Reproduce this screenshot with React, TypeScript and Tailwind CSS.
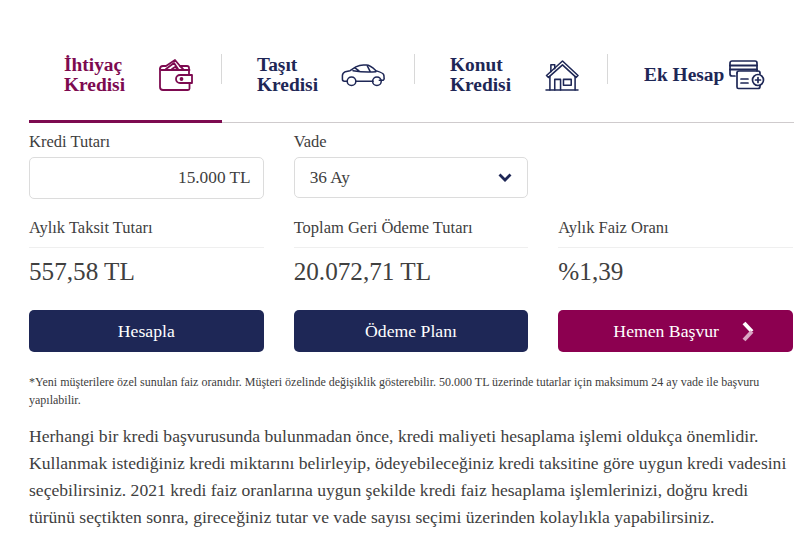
import React from "react";

const serif = "font-['Liberation_Serif','Times_New_Roman',serif]";

function Wallet() {
  return (
    <svg width="36" height="34" viewBox="0 0 36 34" fill="none" stroke="#7d0a50" strokeWidth="1.8" strokeLinejoin="round" strokeLinecap="round">
      <path d="M2 11v18a3 3 0 0 0 3 3h25a1.500 1.500 0 0 0 1.500-1.500V26" />
      <path d="M2 11a3 3 0 0 1 3-3h3l9-6 5 6h7a2 2 0 0 1 2 2v7" />
      <path d="M3 12h28.500" />
      <path d="M8 11l8-6 4 6M14 11l3-2 3 2M22 8l3 3" />
      <path d="M22 17h12v8H22a4 4 0 0 1 0-8z" />
      <circle cx="23.500" cy="21" r="1" />
    </svg>
  );
}

function Car() {
  return (
    <svg width="45" height="23" viewBox="0 0 46 24" fill="none" stroke="#1e2756" strokeWidth="1.600" strokeLinejoin="round" strokeLinecap="round">
      <path d="M6 18H3a2 2 0 0 1-2-2v-4c0-2 1-3 3-4l5-1 6-4c2-1 4-2 8-2h3c3 0 6 2 10 6 3 1 7 2 8 4 .5 1 .5 3 .5 4a2 2 0 0 1-1 2h-4" />
      <path d="M15 18h18" />
      <circle cx="10.500" cy="18" r="4.500" />
      <circle cx="37" cy="18" r="4.500" />
      <path d="M12 7c6 1 14 2 24 1M14 4l4 3M27 2l3 6" />
    </svg>
  );
}

function House() {
  return (
    <svg width="35" height="31" viewBox="0 0 36 32" fill="none" stroke="#1e2756" strokeWidth="1.600" strokeLinejoin="round" strokeLinecap="round">
      <path d="M1 31h33" />
      <path d="M1.500 16 18 1l16 15-2 2L18 5 3.500 18z" />
      <path d="M6 5h4v4M6 5v7" />
      <path d="M5 17v14M31 17v14" />
      <path d="M10 31V20h6v11" />
      <path d="M19 20h8v6h-8z" />
    </svg>
  );
}

function Card() {
  return (
    <svg width="36" height="30" viewBox="0 0 36 30" fill="none" stroke="#1e2756" strokeWidth="1.700" strokeLinejoin="round" strokeLinecap="round">
      <path d="M6 16H3a2 2 0 0 1-2-2V3a2 2 0 0 1 2-2h23a2 2 0 0 1 2 2v8" />
      <path d="M1 5.500h27M1 9.500h27" strokeWidth="1.900" />
      <path d="M8 13a2 2 0 0 1 2-2h19a2 2 0 0 1 2 2v1" />
      <path d="M8 13v14a1.500 1.500 0 0 0 1.500 1.500H29a2 2 0 0 0 2-2v-1" />
      <path d="M12 19h7M12 23h7" />
      <circle cx="29" cy="20" r="5.500" />
      <path d="M26.500 20h5M29 17.500v5" />
    </svg>
  );
}

function Tab({ label, icon, active, divider, gap, last }: { label: React.ReactNode; icon: React.ReactNode; active?: boolean; divider?: boolean; gap: string; last?: boolean }) {
  return (
    <div className={`relative ${last ? "flex-1 pl-[36px]" : "flex-none w-[193px] pl-[35px]"} h-[93px] -mb-px border-b-[3px] pt-[26px] ${active ? "border-[#7d0a50] text-[#7d0a50]" : "border-transparent text-[#1e2756]"}`}>
      <div className={`flex items-center h-[38px] ${gap}`}>
        <span className="text-[19.400px] leading-[20px] font-bold whitespace-nowrap">{label}</span>
        <span className="flex items-center">{icon}</span>
      </div>
      {divider && <span className="absolute right-0 top-[24px] h-[30px] w-px bg-[#d8d8d8]" />}
    </div>
  );
}

function Stat({ label, value }: { label: string; value: string }) {
  return (
    <div>
      <div className="h-[31px] text-[16.500px] leading-[20px] pt-[1px] text-[#404040] border-b border-[#efefef]">{label}</div>
      <div className="mt-[8px] text-[25.200px] leading-[32px] text-[#404040]">{value}</div>
    </div>
  );
}

export default function App() {
  return (
    <div className={`${serif} w-[811px] h-[543px] overflow-hidden bg-white pt-[30px] pl-[29px] pr-[18px]`}>
      <div className="flex border-b border-[#cfcbcd] -mr-px">
        <Tab active divider gap="gap-[33px]" label={<>İhtiyaç<br />Kredisi</>} icon={<Wallet />} />
        <Tab divider gap="gap-[23px]" label={<>Taşıt<br />Kredisi</>} icon={<Car />} />
        <Tab divider gap="gap-[34px]" label={<>Konut<br />Kredisi</>} icon={<House />} />
        <Tab last gap="gap-[5px]" label="Ek Hesap" icon={<Card />} />
      </div>

      <div className="grid grid-cols-3 gap-x-[30px] mt-[9px]">
        <div>
          <div className="text-[16.500px] leading-[20px] text-[#404040]">Kredi Tutarı</div>
          <div className="mt-[5px] h-[42px] rounded-[5px] border border-[#dcdcdc] flex items-center justify-end pr-[12px] text-[17.300px] text-[#404040]">15.000 TL</div>
        </div>
        <div>
          <div className="text-[16.500px] leading-[20px] text-[#404040]">Vade</div>
          <div className="mt-[5px] h-[41px] rounded-[5px] border border-[#dcdcdc] flex items-center justify-between pl-[15px] pr-[15px] text-[17.300px] text-[#404040]">
            <span>36 Ay</span>
            <svg width="14" height="9" viewBox="0 0 14 9" fill="none" stroke="#1e2756" strokeWidth="2.800"><path d="M1.500 1.500 7 7l5.500-5.500" /></svg>
          </div>
        </div>
        <div />
      </div>

      <div className="grid grid-cols-3 gap-x-[30px] mt-[18px]">
        <Stat label="Aylık Taksit Tutarı" value="557,58 TL" />
        <Stat label="Toplam Geri Ödeme Tutarı" value="20.072,71 TL" />
        <Stat label="Aylık Faiz Oranı" value="%1,39" />
      </div>

      <div className="grid grid-cols-3 gap-x-[30px] mt-[22px] text-white text-[17.700px]">
        <div className="h-[42px] rounded-[5px] bg-[#1e2756] flex items-center justify-center">Hesapla</div>
        <div className="h-[42px] rounded-[5px] bg-[#1e2756] flex items-center justify-center">Ödeme Planı</div>
        <div className="h-[42px] rounded-[5px] bg-[#8c0050] flex items-center justify-center relative">
          <span className="mr-[19px]">Hemen Başvur</span>
          <svg className="absolute left-[184px] top-[11px]" width="14" height="21" viewBox="0 0 14 21" fill="none" strokeWidth="4"><path d="M2 2l8 8.500" stroke="#ffffff" /><path d="M10 10.500 2 19" stroke="#d9a6c4" /></svg>
        </div>
      </div>

      <p className="mt-[21px] text-[12px] leading-[18px] text-[#404040]">*Yeni müşterilere özel sunulan faiz oranıdır. Müşteri özelinde değişiklik gösterebilir. 50.000 TL üzerinde tutarlar için maksimum 24 ay vade ile başvuru yapılabilir.</p>
      <p className="mt-[14px] -mr-[2px] text-[17.600px] leading-[27px] text-[#404040]">Herhangi bir kredi başvurusunda bulunmadan önce, kredi maliyeti hesaplama işlemi oldukça önemlidir. Kullanmak istediğiniz kredi miktarını belirleyip, ödeyebileceğiniz kredi taksitine göre uygun kredi vadesini seçebilirsiniz. 2021 kredi faiz oranlarına uygun şekilde kredi faiz hesaplama işlemlerinizi, doğru kredi türünü seçtikten sonra, gireceğiniz tutar ve vade sayısı seçimi üzerinden kolaylıkla yapabilirsiniz.</p>
    </div>
  );
}
